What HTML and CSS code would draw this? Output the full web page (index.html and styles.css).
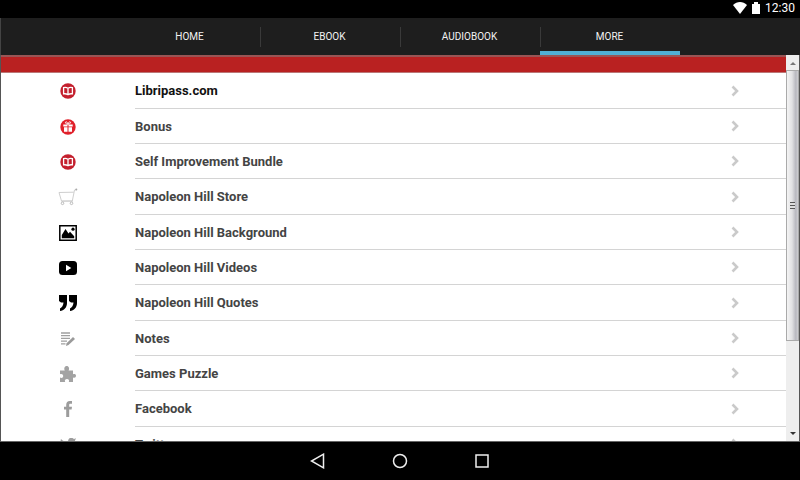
FILE: index.html
```
<!DOCTYPE html>
<html lang="en">
<head>
    <meta charset="UTF-8">
    <meta name="viewport" content="width=device-width, initial-scale=1">
    <title>More</title>
    <link rel="stylesheet" href="styles.css">
</head>
<body>
    <!-- shared icons -->
    <svg class="sprite" aria-hidden="true">
        <symbol id="book" viewBox="0 0 16 16">
            <circle cx="8" cy="8" r="7.7" fill="#c4202e"/>
            <path d="M8 5.2C6.6 4.4 5 4.3 3.6 4.6v6.2c1.5-.2 3 0 4.4.8 1.4-.8 2.900-1 4.400-.8V4.600C11 4.300 9.400 4.400 8 5.200zM8 5.200v6.200" fill="none" stroke="#fff" stroke-width="1.300"/>
        </symbol>
        <symbol id="chevron" viewBox="0 0 8 12">
            <path d="M1.500 1.500L6 6l-4.500 4.500" fill="none" stroke="#cacaca" stroke-width="2.600"/>
        </symbol>
    </svg>

    <header class="status-bar">
        <svg width="14" height="12" viewBox="0 0 14 12"><path d="M7 12L0 3c4-4 10-4 14 0z" fill="#fff"/></svg>
        <svg width="8" height="12" viewBox="0 0 8 12"><path d="M0 2h2V0h4v2h2v10H0z" fill="#fff"/></svg>
        <span class="clock">12:30</span>
    </header>

    <nav class="tabs">
        <a href="#home">HOME</a>
        <a href="#ebook">EBOOK</a>
        <a href="#audiobook">AUDIOBOOK</a>
        <a href="#more" class="active">MORE</a>
    </nav>

    <div class="content">
        <main class="page">
            <div class="banner"></div>
            <ul class="menu">
                <li>
                    <span class="icon"><svg width="16" height="16"><use href="#book"/></svg></span>
                    <a href="#libripass" class="current">Libripass.com <svg width="8" height="12"><use href="#chevron"/></svg></a>
                </li>
                <li>
                    <span class="icon"><svg width="16" height="16" viewBox="0 0 16 16">
                        <circle cx="8" cy="8" r="7.700" fill="#e0202a"/>
                        <path d="M3.300 5.400h4.200v2H3.300zM8.500 5.400h4.200v2H8.500zM4 8.300h3.500v4.500H4zM8.500 8.300H12v4.500H8.500z" fill="#fff"/>
                        <path d="M8 5.200C6.500 5 5 4.400 5.400 3.300 6 2.200 7.600 3 8 5.200c.4-2.200 2-3 2.600-1.900C11 4.400 9.500 5 8 5.200z" fill="none" stroke="#fff" stroke-width=".9"/>
                    </svg></span>
                    <a href="#bonus">Bonus <svg width="8" height="12"><use href="#chevron"/></svg></a>
                </li>
                <li>
                    <span class="icon"><svg width="16" height="16"><use href="#book"/></svg></span>
                    <a href="#bundle">Self Improvement Bundle <svg width="8" height="12"><use href="#chevron"/></svg></a>
                </li>
                <li>
                    <span class="icon"><svg width="20" height="18" viewBox="0 0 20 18">
                        <path d="M19 1.500l-2.500.5-2.200 11H3.500L1 4.500l14.800-.3M3.500 13.200L15 13" fill="none" stroke="#cfcfcf"/>
                        <circle cx="4.500" cy="15.300" r="1.300" fill="none" stroke="#bbb"/>
                        <circle cx="13.500" cy="15.300" r="1.300" fill="none" stroke="#bbb"/>
                        <circle cx="18.300" cy="1.600" r="1" fill="#aaa"/>
                    </svg></span>
                    <a href="#store">Napoleon Hill Store <svg width="8" height="12"><use href="#chevron"/></svg></a>
                </li>
                <li>
                    <span class="icon"><svg width="18" height="16" viewBox="0 0 18 16">
                        <path d="M.8.800h16.400v14.400H.8z" fill="#fff" stroke="#000" stroke-width="1.500"/>
                        <path d="M2.800 13.200V10L6.500 4l3 4.500 1.500-1.700 4.200 4.500v1.900z"/>
                        <circle cx="14" cy="4.200" r="1.600"/>
                    </svg></span>
                    <a href="#background">Napoleon Hill Background <svg width="8" height="12"><use href="#chevron"/></svg></a>
                </li>
                <li>
                    <span class="icon"><svg width="18" height="14" viewBox="0 0 18 14">
                        <rect width="18" height="14" rx="3.500"/>
                        <path d="M7 3.800l5.300 3.200L7 10.200z" fill="#fff"/>
                    </svg></span>
                    <a href="#videos">Napoleon Hill Videos <svg width="8" height="12"><use href="#chevron"/></svg></a>
                </li>
                <li>
                    <span class="icon"><svg width="18" height="16" viewBox="0 0 18 16">
                        <path d="M0 0h8v8c0 4.500-3 7.500-7 8v-2.600C3 12.500 4.300 10.500 4.500 7.500H2L0 6zM10 0h8v8c0 4.500-3 7.500-7 8v-2.600c2-.9 3.300-2.900 3.500-5.900H12L10 6z"/>
                    </svg></span>
                    <a href="#quotes">Napoleon Hill Quotes <svg width="8" height="12"><use href="#chevron"/></svg></a>
                </li>
                <li>
                    <span class="icon"><svg width="14" height="14" viewBox="0 0 14 14">
                        <path d="M0 1h9M0 3.700h9M0 6.400h9M0 9.100h6M0 11.800h4.500" stroke="#a0a0a0" stroke-width="1.300"/>
                        <path d="M12 5l2 2-6.500 6L5 14l.6-2.700z" fill="#9a9a9a"/>
                    </svg></span>
                    <a href="#notes">Notes <svg width="8" height="12"><use href="#chevron"/></svg></a>
                </li>
                <li>
                    <span class="icon"><svg width="16" height="16" viewBox="0 0 16 16">
                        <path d="M0 4.500h4.800C3.700 2.500 4.500 0 6.700 0s3 2.500 1.900 4.500H13v3.800c1.500-.8 3-.2 3 1.500s-1.500 2.500-3 1.600V16H8.800c.8-1.600 0-3-1.800-3s-2.700 1.400-1.800 3H0v-4.500c1.600.9 3.200.2 3.200-1.500S1.600 7.500 0 8.300z" fill="#a3a3a3"/>
                    </svg></span>
                    <a href="#puzzle">Games Puzzle <svg width="8" height="12"><use href="#chevron"/></svg></a>
                </li>
                <li>
                    <span class="icon"><svg width="8" height="16" viewBox="0 0 8 16">
                        <path d="M2.200 16V8.500H0V5.800h2.200V4C2.200 1.500 3.500 0 5.800 0H8v2.700H6.500c-1 0-1.300.4-1.300 1.300v1.800H8l-.4 2.700H5.200V16z" fill="#9c9c9c"/>
                    </svg></span>
                    <a href="#facebook">Facebook <svg width="8" height="12"><use href="#chevron"/></svg></a>
                </li>
                <li>
                    <span class="icon"><svg width="16" height="13" viewBox="0 0 16 13">
                        <path d="M1 1c2 2 4 3 7 3 0-5 4-5 6-3l2-.7-1 2.200C15 9 10 13 5 13c-2 0-4-.6-5-1.500 2 0 3.500-.4 4.500-1.500C3 10 2 9 1.500 8H3C1.500 7 .7 6 .7 4.500L2 5C.7 4 .3 2.500 1 1z" fill="#9c9c9c"/>
                    </svg></span>
                    <a href="#twitter">Twitter <svg width="8" height="12"><use href="#chevron"/></svg></a>
                </li>
            </ul>
        </main>
        <div class="scrollbar">
            <button class="arrow" aria-label="Scroll up"><svg width="6" height="4" viewBox="0 0 6 4"><path d="M0 4l3-3 3 3z" fill="#777"/></svg></button>
            <div class="track">
                <div class="thumb"><span class="grip"></span></div>
            </div>
            <button class="arrow" aria-label="Scroll down"><svg width="6" height="4" viewBox="0 0 6 4"><path d="M0 0h6L3 3z" fill="#333"/></svg></button>
        </div>
    </div>

    <footer class="nav-bar">
        <button aria-label="Back"><svg width="16" height="16" viewBox="0 0 16 16"><path d="M13.500 1.200v13.600L1.500 8z"/></svg></button>
        <button aria-label="Home"><svg width="16" height="16" viewBox="0 0 16 16"><circle cx="8" cy="8" r="6.500"/></svg></button>
        <button aria-label="Recent apps"><svg width="16" height="16" viewBox="0 0 16 16"><path d="M2 2h12v12H2z"/></svg></button>
    </footer>
</body>
</html>
```
FILE: styles.css
```
:root {
    --bar: #1e1e1e;
    --red: #b92121;
    --blue: #4fafd5;
    --line: #d4d4d4;
}

* {
    margin: 0;
    padding: 0;
    box-sizing: border-box;
}

body {
    display: flex;
    flex-direction: column;
    height: 100vh;
    overflow: hidden;
    background: #fff;
    font-family: Roboto, "Liberation Sans", Arial, sans-serif;
}

svg {
    display: block;
}

.sprite {
    display: none;
}

a {
    text-decoration: none;
}

button {
    border: 0;
    background: none;
}

.status-bar {
    display: flex;
    flex: none;
    align-items: center;
    justify-content: flex-end;
    gap: 5px;
    height: 18px;
    padding: 0 5px 2px;
    background: #000;
}

.clock {
    color: #fff;
    font-size: 12px;
    line-height: 16px;
}

.tabs {
    display: flex;
    flex: none;
    justify-content: center;
    height: 37px;
    padding-right: 2px;
    background: var(--bar);
    border-left: 1px solid #444;
}

.tabs a {
    display: flex;
    align-items: center;
    justify-content: center;
    width: 140px;
    border-bottom: 4px solid transparent;
    padding-top: 4px;
    color: #f2f2f2;
    font-size: 10px;
    background: linear-gradient(#3a3a3a, #3a3a3a) no-repeat 0 9px / 1px 20px;
}

.tabs a:first-child {
    background: none;
}

.tabs .active {
    border-bottom-color: var(--blue);
}

.content {
    display: flex;
    flex: 1;
    min-height: 0;
    border-left: 1px solid #555;
    border-right: 1px solid #555;
    border-bottom: 1px solid #666;
}

.page {
    flex: 1;
    overflow: hidden;
}

.banner {
    height: 18px;
    background: var(--red);
    border-top: 2px solid #955;
    border-bottom: 1px solid #b77;
}

.menu {
    list-style: none;
}

.menu li {
    display: flex;
    height: 35px;
}

.menu li:nth-child(3n + 1) {
    height: 36px;
}

.icon {
    display: flex;
    flex: none;
    align-items: center;
    justify-content: center;
    width: 134px;
}

.menu a {
    display: flex;
    flex: 1;
    align-items: center;
    justify-content: space-between;
    padding-right: 47px;
    border-bottom: 1px solid var(--line);
    color: #444;
    font-size: 13px;
    font-weight: bold;
}

.menu .current {
    color: #111;
}

.scrollbar {
    display: flex;
    flex: none;
    flex-direction: column;
    width: 13px;
    background: #eee;
}

.arrow {
    display: flex;
    flex: none;
    align-items: center;
    justify-content: center;
    height: 15px;
}

.track {
    flex: 1;
}

.thumb {
    display: flex;
    align-items: center;
    justify-content: center;
    height: 76%;
    border: 1px solid #aaa;
    background: linear-gradient(90deg, #f4f4f4, #e2e2e4 45%, #b8b8bf 80%, #cfcfd3);
}

.grip {
    width: 5px;
    height: 7px;
    background: repeating-linear-gradient(#555 0 1px, #ddd 1px 3px);
}

.nav-bar {
    display: flex;
    flex: none;
    align-items: center;
    justify-content: center;
    gap: 50px;
    height: 38px;
    background: #000;
}

.nav-bar button {
    width: 32px;
    height: 32px;
    padding: 8px;
}

.nav-bar svg {
    fill: none;
    stroke: #eee;
    stroke-width: 1.5;
}
```
